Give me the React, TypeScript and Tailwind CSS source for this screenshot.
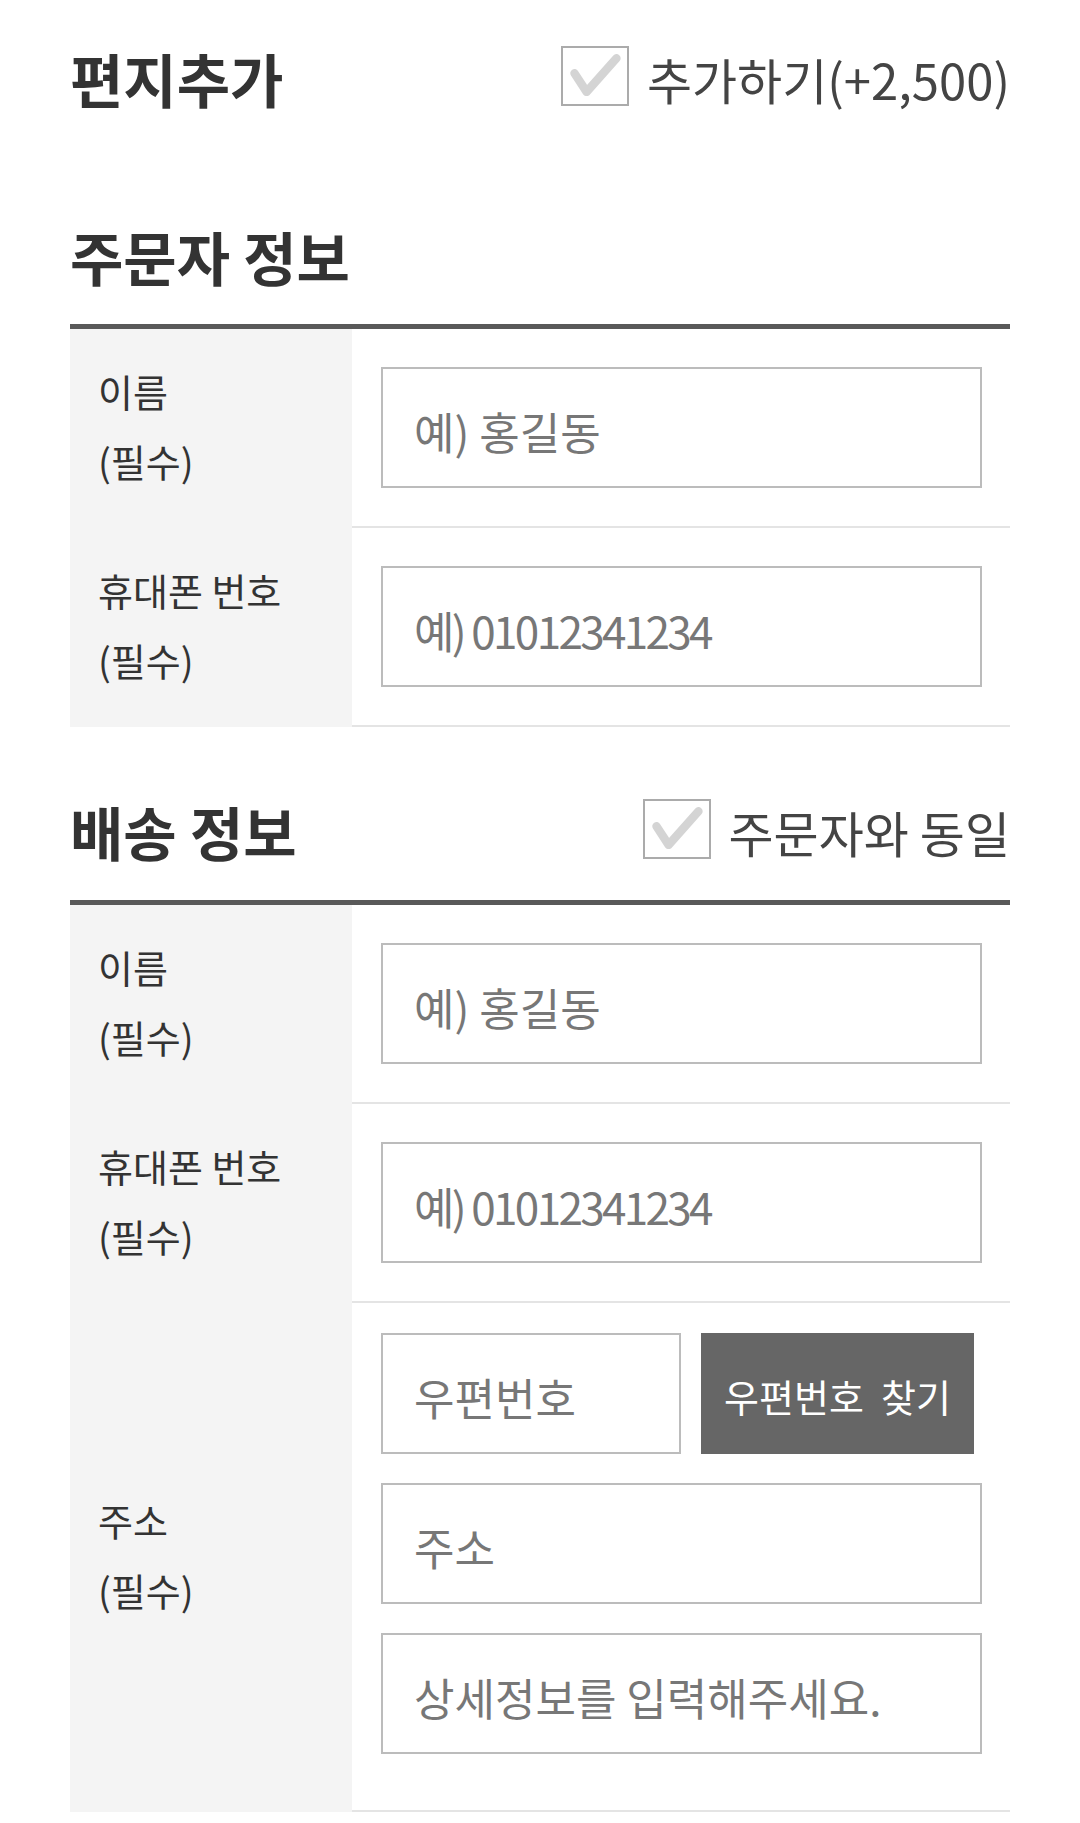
import type { ReactNode } from 'react';

const FONT = "font-['Noto_Sans_CJK_KR','Noto_Sans',sans-serif]";

/** Grey square with a faded check, as used next to "추가하기" and "주문자와 동일". */
const CheckBox = ({ label }: { label: string }) => (
  <label className="flex items-center gap-[18px]">
    <span className="-mt-[4px] flex h-[60px] w-[68px] items-center justify-center border-2 border-[#ababab] bg-white">
      <svg viewBox="0 0 68 60" className="h-full w-full">
        <polyline
          points="12,27 25,47 57,11"
          fill="none"
          stroke="#d4d4d4"
          strokeWidth="9"
          strokeLinecap="round"
          strokeLinejoin="round"
        />
      </svg>
    </span>
    <span className="text-[49px] leading-none text-[#444]">{label}</span>
  </label>
);

const TextField = ({ placeholder, className = '' }: { placeholder: string; className?: string }) => (
  <input
    type="text"
    placeholder={placeholder}
    className={`h-[121px] border-2 border-[#bcbcbc] bg-white pl-[31px] pt-[6px] text-[44px] text-[#333] outline-none placeholder:text-[#777] ${className}`}
  />
);

// grey label cell on the left, fields on the right; the row line runs under the fields only
const FieldRow = ({
  label,
  children,
  pad = 'py-[38px]',
}: {
  label: string;
  children: ReactNode;
  pad?: string;
}) => (
  <div className="grid grid-cols-[282px_1fr]">
    <div className="flex flex-col justify-center bg-[#f4f4f4] pb-[6px] pl-[28px] text-[38px] leading-[70px] text-[#333]">
      <span>{label}</span>
      <span>(필수)</span>
    </div>
    <div className={`flex flex-col gap-[29px] border-b-2 border-[#e4e4e4] pl-[29px] pr-[28px] ${pad}`}>
      {children}
    </div>
  </div>
);

const Title = ({ children }: { children: ReactNode }) => (
  <h2 className="text-[58px] font-bold leading-none text-[#333]">{children}</h2>
);

export default function App() {
  return (
    <div className={`min-h-[1823px] bg-white px-[70px] ${FONT}`}>
      {/* 편지추가 */}
      <div className="flex h-[156px] items-center justify-between">
        <Title>편지추가</Title>
        <CheckBox label="추가하기(+2,500)" />
      </div>

      {/* 주문자 정보 */}
      <div className="mt-[32px] flex h-[136px] items-center">
        <Title>주문자 정보</Title>
      </div>
      <div className="border-t-[5px] border-[#595959]">
        <FieldRow label="이름">
          <TextField placeholder="예) 홍길동" className="w-full" />
        </FieldRow>
        <FieldRow label="휴대폰 번호">
          <TextField placeholder="예) 01012341234" className="w-full tracking-[-0.06em]" />
        </FieldRow>
      </div>

      {/* 배송 정보 */}
      <div className="mt-[35px] flex h-[138px] items-center justify-between">
        <Title>배송 정보</Title>
        <CheckBox label="주문자와 동일" />
      </div>
      <div className="border-t-[5px] border-[#595959]">
        <FieldRow label="이름">
          <TextField placeholder="예) 홍길동" className="w-full" />
        </FieldRow>
        <FieldRow label="휴대폰 번호">
          <TextField placeholder="예) 01012341234" className="w-full tracking-[-0.06em]" />
        </FieldRow>
        <FieldRow label="주소" pad="pt-[30px] pb-[56px]">
          <div className="flex gap-[20px]">
            <TextField placeholder="우편번호" className="w-[300px]" />
            <button
              type="button"
              className="h-[121px] w-[273px] bg-[#666] pt-[4px] text-[38px] text-white"
            >
              우편번호&nbsp; 찾기
            </button>
          </div>
          <TextField placeholder="주소" className="w-full" />
          <TextField placeholder="상세정보를 입력해주세요." className="w-full" />
        </FieldRow>
      </div>
    </div>
  );
}
